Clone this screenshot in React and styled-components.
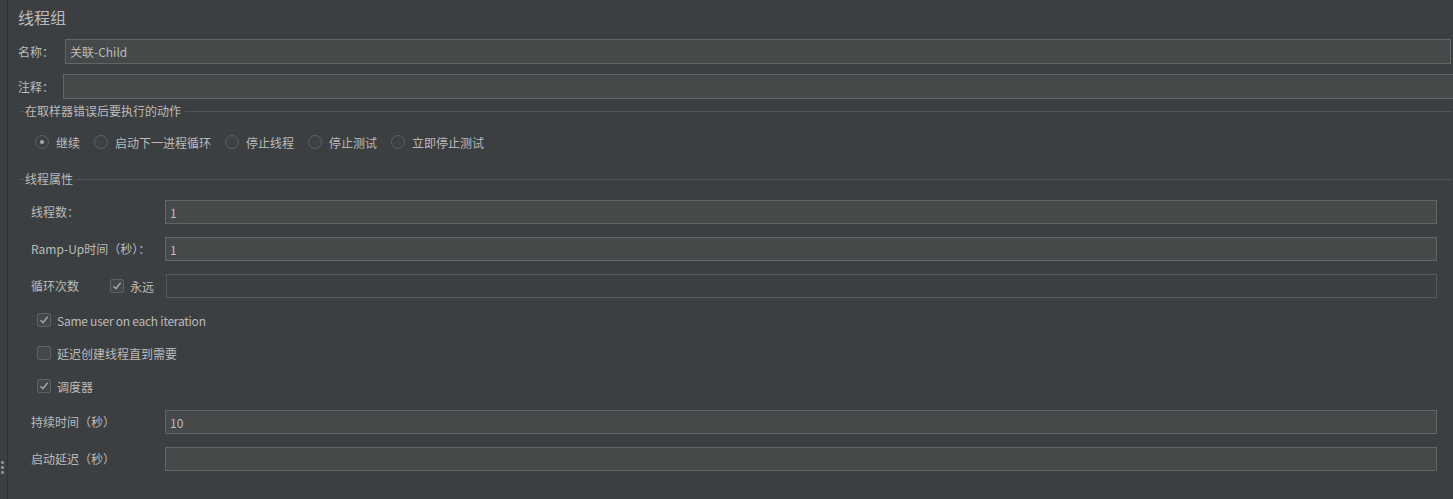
import React from 'react';
import styled, { createGlobalStyle } from 'styled-components';

const GlobalStyle = createGlobalStyle`
  html, body {
    margin: 0;
    padding: 0;
    background: #3c3f41;
  }
  body {
    font-family: "Noto Sans CJK SC", "Noto Sans", sans-serif;
    font-size: 12px;
    color: #bbbbbb;
  }
`;

const Frame = styled.div`
  display: flex;
  width: 1453px;
  height: 499px;
  overflow: hidden;
  background: #3c3f41;
`;

const Gutter = styled.div`
  width: 8px;
  flex: none;
  border-right: 1px solid #2f3133;
  display: flex;
  flex-direction: column;
  justify-content: flex-end;
  padding-bottom: 25px;
  box-sizing: border-box;
`;

const Grip = styled.div`
  display: flex;
  flex-direction: column;
  gap: 2px;
  margin-left: 1px;
`;

const GripDot = styled.span`
  width: 3px;
  height: 3px;
  border-radius: 1px;
  background: #8c8f91;
`;

const Panel = styled.div`
  flex: 1;
  display: flex;
  flex-direction: column;
  padding: 6px 0 0 10px;
  min-width: 0;
`;

const Title = styled.div`
  font-size: 16px;
  line-height: 22px;
  height: 22px;
  margin-bottom: 11px;
`;

const FieldRow = styled.div`
  display: flex;
  align-items: center;
  height: 25px;
  margin-bottom: ${p => p.$gap || 0}px;
  margin-right: ${p => p.$right ?? 2}px;
`;

const Label = styled.span`
  width: ${p => p.$w}px;
  flex: none;
  white-space: nowrap;
  line-height: 16px;
`;

const Field = styled.div`
  flex: 1;
  height: ${p => p.$h || 25}px;
  box-sizing: border-box;
  border: 1px solid ${p => (p.$disabled ? '#56595b' : '#646464')};
  background: ${p => (p.$disabled ? '#3c3f41' : '#45494a')};
  padding: 0 4px;
  display: flex;
  align-items: center;
  color: #bbbbbb;
  font-size: 12px;
  white-space: nowrap;
`;

const Group = styled.div`
  margin-left: 2px;
  margin-right: 2px;
  margin-top: ${p => p.$top}px;
`;

const GroupHead = styled.div`
  display: flex;
  align-items: center;
  height: 16px;
  &::before {
    content: '';
    width: 4px;
    border-top: 1px solid #545658;
    margin-right: 1px;
  }
  &::after {
    content: '';
    flex: 1;
    border-top: 1px solid #545658;
    margin-left: 4px;
  }
`;

const GroupTitle = styled.span`
  line-height: 16px;
`;

const RadioRow = styled.div`
  display: flex;
  align-items: center;
  height: 20px;
  margin: 13px 0 0 15px;
`;

const RadioItem = styled.label`
  display: flex;
  align-items: center;
  margin-right: 14px;
`;

const RadioDot = styled.span`
  width: 14px;
  height: 14px;
  box-sizing: border-box;
  border-radius: 50%;
  border: 1px solid #5e6163;
  background: #3e4143;
  margin-right: 7px;
  display: flex;
  align-items: center;
  justify-content: center;
  &::after {
    content: '';
    width: 4px;
    height: 4px;
    border-radius: 50%;
    background: ${p => (p.$on ? '#a7a7a7' : 'transparent')};
  }
`;

const Props = styled.div`
  display: flex;
  flex-direction: column;
  padding-left: 11px;
  margin-top: 13px;
`;

const PropRow = styled.div`
  display: flex;
  align-items: center;
  height: 24px;
  margin-right: 14px;
  margin-bottom: ${p => p.$gap ?? 13}px;
`;

const CheckRow = styled.div`
  display: flex;
  align-items: center;
  height: 20px;
  padding-left: 6px;
  margin-bottom: ${p => p.$gap ?? 13}px;
  letter-spacing: ${p => (p.$tight ? '-0.25px' : 'normal')};
`;

const Box = styled.span`
  width: 14px;
  height: 14px;
  box-sizing: border-box;
  border: 1px solid #5f6264;
  border-radius: 2px;
  background: #43474a;
  margin-right: 6px;
  display: flex;
  align-items: center;
  justify-content: center;
  flex: none;
`;

const Inline = styled.div`
  display: flex;
  align-items: center;
  width: 56px;
  flex: none;
`;

const Check = ({ on }) => (
  <Box>
    {on && (
      <svg width="10" height="10" viewBox="0 0 10 10">
        <path d="M1.5 5.2 L4 7.8 L8.6 1.8" fill="none" stroke="#a9a9a9" strokeWidth="1.4" />
      </svg>
    )}
  </Box>
);

const radios = [
  { label: '继续', on: true },
  { label: '启动下一进程循环' },
  { label: '停止线程' },
  { label: '停止测试' },
  { label: '立即停止测试' },
];

export default function App() {
  return (
    <>
      <GlobalStyle />
      <Frame>
        <Gutter>
          <Grip>
            <GripDot />
            <GripDot />
            <GripDot />
          </Grip>
        </Gutter>
        <Panel>
          <Title>线程组</Title>
          <FieldRow $gap={10}>
            <Label $w={47}>名称：</Label>
            <Field>关联-Child</Field>
          </FieldRow>
          <FieldRow $right={-4}>
            <Label $w={45}>注释：</Label>
            <Field />
          </FieldRow>

          <Group $top={4}>
            <GroupHead>
              <GroupTitle>在取样器错误后要执行的动作</GroupTitle>
            </GroupHead>
            <RadioRow>
              {radios.map(r => (
                <RadioItem key={r.label}>
                  <RadioDot $on={r.on} />
                  {r.label}
                </RadioItem>
              ))}
            </RadioRow>
          </Group>

          <Group $top={19}>
            <GroupHead>
              <GroupTitle>线程属性</GroupTitle>
            </GroupHead>
            <Props>
              <PropRow>
                <Label $w={134}>线程数：</Label>
                <Field $h={24}>1</Field>
              </PropRow>
              <PropRow>
                <Label $w={134}>Ramp-Up时间（秒）：</Label>
                <Field $h={24}>1</Field>
              </PropRow>
              <PropRow $gap={12}>
                <Label $w={79}>循环次数</Label>
                <Inline>
                  <Check on />
                  永远
                </Inline>
                <Field $h={24} $disabled />
              </PropRow>
              <CheckRow $tight>
                <Check on />
                Same user on each iteration
              </CheckRow>
              <CheckRow>
                <Check />
                延迟创建线程直到需要
              </CheckRow>
              <CheckRow $gap={14}>
                <Check on />
                调度器
              </CheckRow>
              <PropRow>
                <Label $w={134}>持续时间（秒）</Label>
                <Field $h={24}>10</Field>
              </PropRow>
              <PropRow>
                <Label $w={134}>启动延迟（秒）</Label>
                <Field $h={24} />
              </PropRow>
            </Props>
          </Group>
        </Panel>
      </Frame>
    </>
  );
}
